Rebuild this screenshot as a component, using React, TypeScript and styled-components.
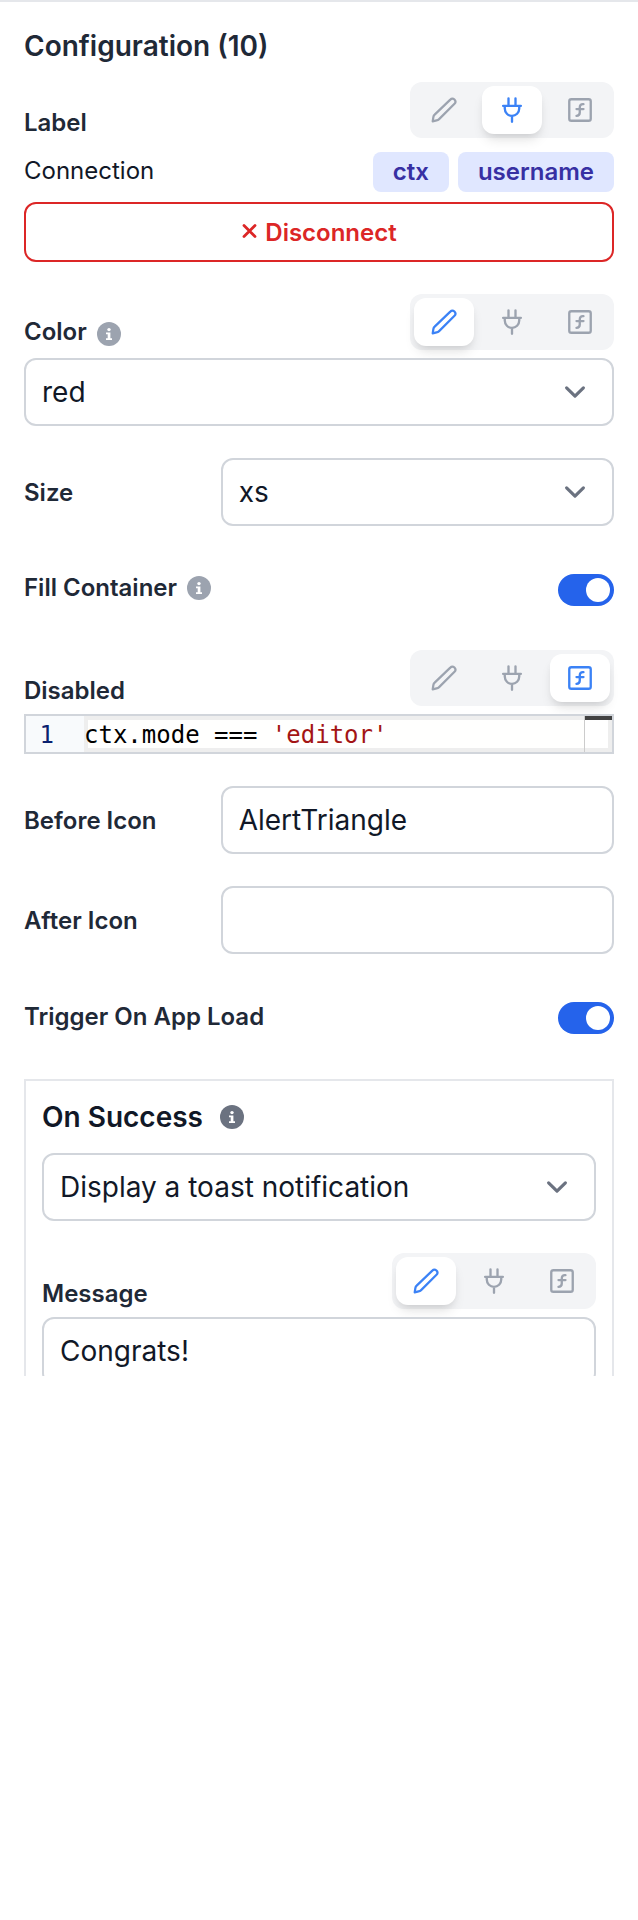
import React, { useId, useState } from "react";
import styled, { createGlobalStyle, css } from "styled-components";

const GlobalStyle = createGlobalStyle`
  *, *::before, *::after { box-sizing: border-box; }
  body {
    margin: 0;
    background: #ffffff;
    color: #111827;
    font-family: Inter, "Liberation Sans", sans-serif;
  }
  button, input, select { font-family: inherit; }
`;

const Panel = styled.main`
  max-height: 1376px;
  overflow: hidden;
  border-top: 2px solid #e5e7eb;
  padding: 24px 24px 0;
`;

const Title = styled.h1`
  margin: 0 0 16px;
  font-size: 28px;
  line-height: 40px;
  font-weight: 600;
  color: #1f2937;
`;

const Fields = styled.div`
  display: flex;
  flex-direction: column;
  gap: 32px;
`;

const StackedField = styled.div`
  display: flex;
  flex-direction: column;
  gap: 8px;
`;

const FieldHeader = styled.div`
  display: flex;
  justify-content: space-between;
  align-items: flex-end;
`;

const InlineField = styled.div`
  display: grid;
  grid-template-columns: 1fr 2fr;
  align-items: center;
`;

const SwitchField = styled.div`
  display: flex;
  justify-content: space-between;
  align-items: flex-end;
  min-height: 60px;
  padding: 12px 0;
`;

const LabelGroup = styled.div`
  display: flex;
  align-items: center;
  gap: 10px;
`;

const labelText = css`
  padding-top: 2px;
  font-size: 24px;
  line-height: 30px;
  font-weight: 600;
  color: #1f2937;
`;

const Label = styled.label`
  ${labelText}
`;

const InfoLabel = styled(Label)`
  padding: 0 0 4px;
  line-height: 28px;
`;

const SwitchLabel = styled(Label)<{ $info?: boolean }>`
  padding: 0;
  line-height: ${(p) => (p.$info ? 36 : 34)}px;
`;

const GroupLabel = styled.span`
  ${labelText}
`;

const ModeGroup = styled.div`
  display: flex;
  gap: 8px;
  padding: 4px;
  border-radius: 12px;
  background: #f3f4f6;
`;

const ModeButton = styled.button<{ $active: boolean }>`
  display: flex;
  align-items: center;
  justify-content: center;
  width: 60px;
  height: 48px;
  padding: 0;
  border: 0;
  border-radius: 12px;
  cursor: pointer;
  color: ${(p) => (p.$active ? "#3b82f6" : "#9ca3af")};
  background: ${(p) => (p.$active ? "#ffffff" : "transparent")};
  box-shadow: ${(p) =>
    p.$active ? "0 8px 12px -2px rgba(0,0,0,0.1), 0 4px 8px -4px rgba(0,0,0,0.1)" : "none"};
`;

const ConnectionRow = styled.div`
  display: flex;
  justify-content: space-between;
  align-items: flex-start;
  margin: 6px 0 2px;
`;

const ConnectionName = styled.span`
  font-size: 24px;
  line-height: 38px;
`;

const Tags = styled.div`
  display: flex;
  gap: 9px;
`;

const Tag = styled.span`
  padding: 4px 20px;
  border-radius: 8px;
  font-size: 24px;
  line-height: 32px;
  font-weight: 600;
  color: #3730a3;
  background: #e0e7ff;
`;

const DisconnectButton = styled.button`
  display: flex;
  align-items: center;
  justify-content: center;
  gap: 8px;
  height: 60px;
  border: 2px solid #dc2626;
  border-radius: 12px;
  font-size: 24px;
  font-weight: 600;
  color: #dc2626;
  background: #ffffff;
  cursor: pointer;
`;

const controlBox = css`
  display: block;
  width: 100%;
  height: 68px;
  margin: 0;
  padding: 0 16px;
  border: 2px solid #d1d5db;
  border-radius: 12px;
  font-size: 28px;
  line-height: 40px;
  color: #111827;
  background: #ffffff;
`;

const TextInput = styled.input`
  ${controlBox}
`;

const SelectWrap = styled.div`
  position: relative;
`;

const NativeSelect = styled.select`
  ${controlBox}
  appearance: none;
  padding-right: 72px;
`;

const Chevron = styled.svg`
  position: absolute;
  top: 13px;
  right: 18px;
  width: 42px;
  height: 42px;
  pointer-events: none;
`;

const Switch = styled.input`
  appearance: none;
  display: flex;
  align-items: center;
  width: 56px;
  height: 32px;
  margin: 0;
  padding: 4px;
  border-radius: 16px;
  background: #d1d5db;
  cursor: pointer;

  &::before {
    content: "";
    width: 24px;
    height: 24px;
    border-radius: 50%;
    background: #ffffff;
  }

  &:checked {
    justify-content: flex-end;
    background: #2563eb;
  }
`;

const Editor = styled.div`
  display: flex;
  height: 40px;
  border: 2px solid #d1d5db;
  font-family: "DejaVu Sans Mono", monospace;
  font-size: 24px;
  line-height: 38px;
`;

const Gutter = styled.div`
  width: 58px;
  padding-right: 30px;
  text-align: right;
  color: #0b216f;
  background: #f8fafc;
`;

const CodeLine = styled.div`
  flex: 1;
  min-width: 0;
  overflow: hidden;
  box-shadow: inset 4px 4px #eeeeee, inset 0 -4px #eeeeee;
  white-space: pre;
  color: #000000;
  background: #fffffe;
  outline: none;
`;

const CodeString = styled.span`
  color: #a31515;
`;

const Minimap = styled.div`
  width: 28px;
  border-left: 1px solid #cccccc;
  box-shadow: inset 0 4px #424242, inset -4px -4px #eeeeee;
`;

const Card = styled.section`
  margin-top: 33px;
  padding: 16px;
  border: 2px solid #e5e7eb;
`;

const CardHeader = styled.div`
  display: flex;
  align-items: center;
  gap: 17px;
  margin-bottom: 16px;
`;

const CardTitle = styled.h2`
  margin: 0;
  font-size: 28px;
  line-height: 40px;
  font-weight: 600;
  color: #111827;
`;

const strokeProps = {
  width: 28,
  height: 28,
  viewBox: "0 0 24 24",
  fill: "none",
  stroke: "currentColor",
  strokeLinecap: "round" as const,
  strokeLinejoin: "round" as const,
  "aria-hidden": true,
};

const PencilIcon = () => (
  <svg {...strokeProps} strokeWidth={1.9}>
    <path d="M17.4 3.1a2.3 2.3 0 0 1 3.6 3.5L7.8 19.8Q6.9 20.7 5.6 20.9L2.3 21.7 2.9 18Q3.1 16.8 4 16Z" />
  </svg>
);

const PlugIcon = () => (
  <svg {...strokeProps} strokeWidth={2}>
    <path d="M9 8V2M15 8V2M4.4 8.4h15.2M5.8 8.4v2.4a6.2 6.2 0 0 0 12.4 0V8.4M12 17.3V22" />
  </svg>
);

const FunctionIcon = () => (
  <svg {...strokeProps} strokeWidth={2}>
    <rect x="2.8" y="2.8" width="18.4" height="18.4" rx="1.8" />
    <path d="M9 17c2 0 2.8-1 2.8-2.8V10c0-2 1-3.3 3.2-3M9 11.2h6" />
  </svg>
);

const InfoIcon = ({ color = "#9ca3af" }: { color?: string }) => (
  <svg width="24" height="24" viewBox="0 0 24 24" aria-hidden>
    <circle cx="12" cy="12" r="12" fill={color} />
    <circle cx="12" cy="7.6" r="1.7" fill="#fff" />
    <path d="M9 10.5h4.4v5.7H15V18H9v-1.8h1.7v-3.9H9z" fill="#fff" />
  </svg>
);

const CrossIcon = () => (
  <svg width="16" height="16" viewBox="0 0 16 16" aria-hidden>
    <path d="M3 1.5 14 12.5M14 1.5 3 12.5" stroke="currentColor" strokeWidth="2.8" strokeLinecap="round" />
  </svg>
);

type Mode = "value" | "connection" | "function";

const modes: { id: Mode; name: string; Icon: () => React.JSX.Element }[] = [
  { id: "value", name: "Static value", Icon: PencilIcon },
  { id: "connection", name: "Connection", Icon: PlugIcon },
  { id: "function", name: "Function", Icon: FunctionIcon },
];

function ModePicker({ initial }: { initial: Mode }) {
  const [mode, setMode] = useState<Mode>(initial);
  return (
    <ModeGroup role="group">
      {modes.map(({ id, name, Icon }) => (
        <ModeButton
          key={id}
          type="button"
          aria-label={name}
          aria-pressed={mode === id}
          $active={mode === id}
          onClick={() => setMode(id)}
        >
          <Icon />
        </ModeButton>
      ))}
    </ModeGroup>
  );
}

function Select({ id, label, options }: { id: string; label?: string; options: string[] }) {
  return (
    <SelectWrap>
      <NativeSelect id={id} aria-labelledby={label} defaultValue={options[0]}>
        {options.map((o) => (
          <option key={o}>{o}</option>
        ))}
      </NativeSelect>
      <Chevron viewBox="0 0 20 20" fill="none" aria-hidden>
        <path
          d="M6 8l4 4 4-4"
          stroke="#6b7280"
          strokeWidth="1.5"
          strokeLinecap="round"
          strokeLinejoin="round"
        />
      </Chevron>
    </SelectWrap>
  );
}

function SwitchRow({ label, info }: { label: string; info?: boolean }) {
  const id = useId();
  return (
    <SwitchField>
      <LabelGroup>
        <SwitchLabel htmlFor={id} $info={info}>
          {label}
        </SwitchLabel>
        {info && <InfoIcon />}
      </LabelGroup>
      <Switch id={id} type="checkbox" role="switch" defaultChecked />
    </SwitchField>
  );
}

export default function App() {
  return (
    <>
      <GlobalStyle />
      <Panel>
        <Title>Configuration (10)</Title>
        <Fields>
          <StackedField>
            <FieldHeader>
              <GroupLabel>Label</GroupLabel>
              <ModePicker initial="connection" />
            </FieldHeader>
            <ConnectionRow>
              <ConnectionName>Connection</ConnectionName>
              <Tags>
                <Tag>ctx</Tag>
                <Tag>username</Tag>
              </Tags>
            </ConnectionRow>
            <DisconnectButton type="button">
              <CrossIcon />
              Disconnect
            </DisconnectButton>
          </StackedField>

          <StackedField>
            <FieldHeader>
              <LabelGroup>
                <InfoLabel htmlFor="color">Color</InfoLabel>
                <InfoIcon />
              </LabelGroup>
              <ModePicker initial="value" />
            </FieldHeader>
            <Select id="color" options={["red", "green", "blue"]} />
          </StackedField>

          <InlineField>
            <Label htmlFor="size">Size</Label>
            <Select id="size" options={["xs", "sm", "md", "lg"]} />
          </InlineField>

          <SwitchRow label="Fill Container" info />

          <StackedField>
            <FieldHeader>
              <GroupLabel id="disabled-label">Disabled</GroupLabel>
              <ModePicker initial="function" />
            </FieldHeader>
            <Editor>
              <Gutter>1</Gutter>
              <CodeLine
                role="textbox"
                aria-labelledby="disabled-label"
                contentEditable
                suppressContentEditableWarning
                spellCheck={false}
              >
                ctx.mode === <CodeString>'editor'</CodeString>
              </CodeLine>
              <Minimap />
            </Editor>
          </StackedField>

          <InlineField>
            <Label htmlFor="before-icon">Before Icon</Label>
            <TextInput id="before-icon" type="text" defaultValue="AlertTriangle" />
          </InlineField>

          <InlineField>
            <Label htmlFor="after-icon">After Icon</Label>
            <TextInput id="after-icon" type="text" />
          </InlineField>

          <SwitchRow label="Trigger On App Load" />
        </Fields>

        <Card>
          <CardHeader>
            <CardTitle id="on-success-title">On Success</CardTitle>
            <InfoIcon color="#6b7280" />
          </CardHeader>
          <Fields>
            <Select
              id="on-success"
              label="on-success-title"
              options={["Display a toast notification", "Do nothing"]}
            />
            <StackedField>
              <FieldHeader>
                <Label htmlFor="message">Message</Label>
                <ModePicker initial="value" />
              </FieldHeader>
              <TextInput id="message" type="text" defaultValue="Congrats!" />
            </StackedField>
          </Fields>
        </Card>
      </Panel>
    </>
  );
}
